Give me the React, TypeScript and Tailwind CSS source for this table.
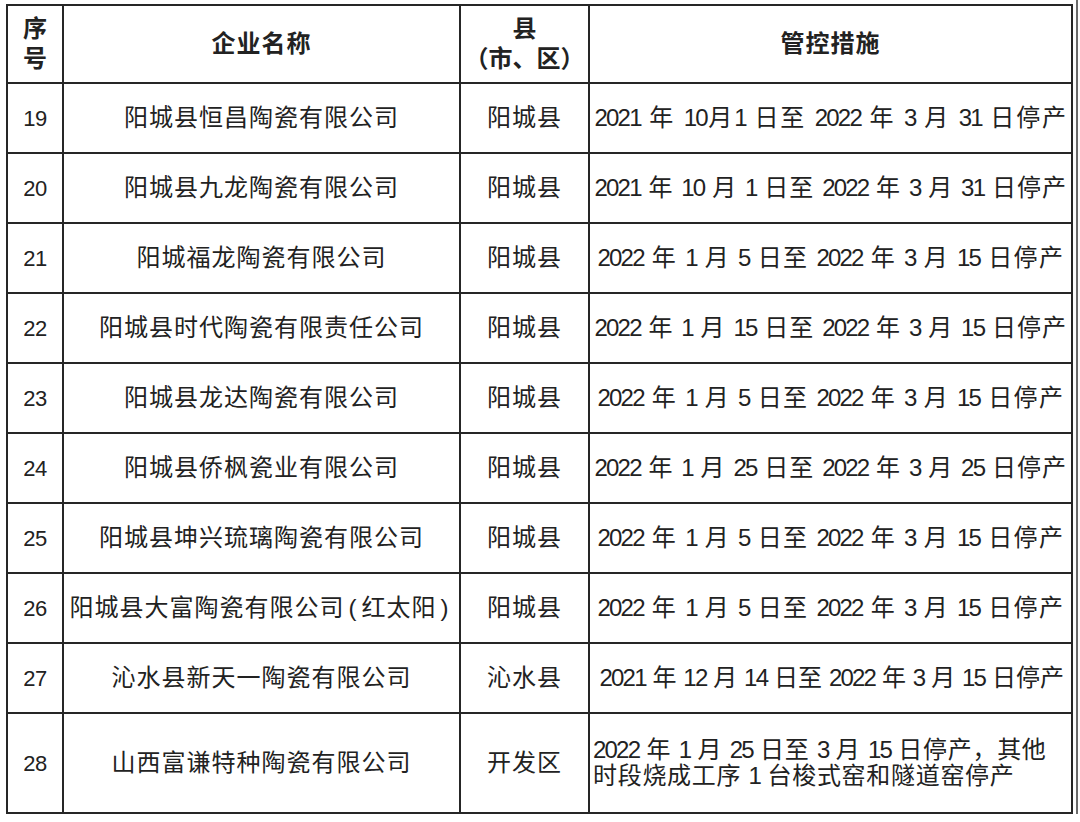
import React from "react";

const rows: [string, React.ReactNode, string, string][] = [
  ["19", "阳城县恒昌陶瓷有限公司", "阳城县", "2021 年 10月1 日至 2022 年 3 月 31 日停产"],
  ["20", "阳城县九龙陶瓷有限公司", "阳城县", "2021 年 10 月 1 日至 2022 年 3 月 31 日停产"],
  ["21", "阳城福龙陶瓷有限公司", "阳城县", "2022 年 1 月 5 日至 2022 年 3 月 15 日停产"],
  ["22", "阳城县时代陶瓷有限责任公司", "阳城县", "2022 年 1 月 15 日至 2022 年 3 月 15 日停产"],
  ["23", "阳城县龙达陶瓷有限公司", "阳城县", "2022 年 1 月 5 日至 2022 年 3 月 15 日停产"],
  ["24", "阳城县侨枫瓷业有限公司", "阳城县", "2022 年 1 月 25 日至 2022 年 3 月 25 日停产"],
  ["25", "阳城县坤兴琉璃陶瓷有限公司", "阳城县", "2022 年 1 月 5 日至 2022 年 3 月 15 日停产"],
  [
    "26",
    <span>
      阳城县大富陶瓷有限公司<span className="mx-[4px]">(</span>红太阳<span className="mx-[4px]">)</span>
    </span>,
    "阳城县",
    "2022 年 1 月 5 日至 2022 年 3 月 15 日停产",
  ],
  ["27", "沁水县新天一陶瓷有限公司", "沁水县", "2021 年 12 月 14 日至 2022 年 3 月 15 日停产"],
];

const font = { fontFamily: "'Liberation Sans','Noto Sans CJK SC',sans-serif" };

function Digits({ text }: { text: string }) {
  const parts = text.split(/(\d+)/);
  return (
    <>
      {parts.map((p, i) =>
        /^\d+$/.test(p) ? (
          <span key={i} className="tracking-[-1.8px]">
            {p}
          </span>
        ) : (
          <React.Fragment key={i}>{p}</React.Fragment>
        )
      )}
    </>
  );
}

function widthFor(n: string) {
  if (n === "27") return "w-[462px] tracking-[0.1px]";
  if (n === "19" || n === "20" || n === "22" || n === "24") return "w-[472px] tracking-[0.4px]";
  return "w-[466px] tracking-[0.6px]";
}

export default function App() {
  return (
    <div className="w-[1080px] h-[822px] bg-white text-[#222] overflow-hidden" style={font}>
      <div className="ml-[6px] mt-[4px] w-fit flex">
        <div className="grid grid-cols-[54px_395px_127px_481px] grid-rows-[76px_repeat(9,68px)_98px] gap-[2px] p-[2px] bg-[#262626]">
          <div className="bg-white flex flex-col items-center justify-center font-bold text-[24px] leading-[30px]">
            <span>序</span>
            <span>号</span>
          </div>
          <div className="bg-white flex items-center justify-center font-bold text-[24px] tracking-[1px]">
            企业名称
          </div>
          <div className="bg-white flex flex-col items-center justify-center font-bold text-[24px] leading-[30px]">
            <span>县</span>
            <span>（市、区）</span>
          </div>
          <div className="bg-white flex items-center justify-center font-bold text-[24px] tracking-[1px]">
            管控措施
          </div>
          {rows.map(([n, name, county, measure]) => (
            <React.Fragment key={n}>
              <div className="bg-white flex items-center justify-center text-[22px] tracking-[-0.5px]">{n}</div>
              <div className="bg-white flex items-center justify-center text-[24px] tracking-[1px] whitespace-nowrap">
                {name}
              </div>
              <div className="bg-white flex items-center justify-center text-[24px] tracking-[1px]">{county}</div>
              <div className="bg-white flex items-center justify-center text-[24px]">
                <span
                  className={
                    "block whitespace-nowrap text-justify [text-align-last:justify] " + widthFor(n)
                  }
                >
                  <Digits text={measure} />
                </span>
              </div>
            </React.Fragment>
          ))}
          <div className="bg-white flex items-center justify-center text-[22px] tracking-[-0.5px]">28</div>
          <div className="bg-white flex items-center justify-center text-[24px] tracking-[1px] whitespace-nowrap">
            山西富谦特种陶瓷有限公司
          </div>
          <div className="bg-white flex items-center justify-center text-[24px] tracking-[1px]">开发区</div>
          <div className="bg-white flex flex-col justify-center pl-[3px] text-[24px] leading-[26px] tracking-[0.7px] whitespace-nowrap">
            <span>
              <Digits text="2022 年 1 月 25 日至 3 月 15 日停产，其他" />
            </span>
            <span>
              <Digits text="时段烧成工序 1 台梭式窑和隧道窑停产" />
            </span>
          </div>
        </div>
        <div className="w-[3px]" />
        <div className="w-[2px] h-[814px] -mt-[4px] bg-[#6b6b6b]" />
      </div>
    </div>
  );
}
